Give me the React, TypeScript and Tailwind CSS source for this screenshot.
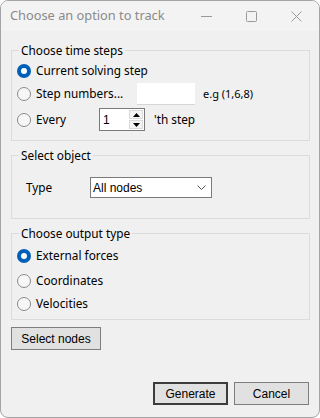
const UI_FONT = "font-['Noto_Sans',sans-serif]";
const MS_FONT = "font-['Liberation_Sans',Arial,sans-serif]";

function Radio({ checked }: { checked?: boolean }) {
  if (checked) {
    return (
      <span className="flex h-[14px] w-[14px] shrink-0 items-center justify-center rounded-full bg-[#005fb8]">
        <span className="h-[6px] w-[6px] rounded-full bg-white" />
      </span>
    );
  }
  return (
    <span className="h-[14px] w-[14px] shrink-0 rounded-full border border-[#8a8a8a] bg-[#f7f7f7]" />
  );
}

function RadioRow({
  label,
  checked,
  className = "",
}: {
  label: string;
  checked?: boolean;
  className?: string;
}) {
  return (
    <div className={`flex h-[22px] items-center gap-[5px] ${className}`}>
      <Radio checked={checked} />
      <span>{label}</span>
    </div>
  );
}

function Group({
  title,
  children,
  className = "",
}: {
  title: string;
  children: React.ReactNode;
  className?: string;
}) {
  return (
    <fieldset
      className={`border border-[#dcdcdc] px-[5px] ${className}`}
    >
      <legend className="ml-[2px] px-[2px] leading-[16px]">{title}</legend>
      {children}
    </fieldset>
  );
}

function Spinner() {
  return (
    <div className="ml-[45px] flex h-[23px] w-[46px] items-center border border-[#7a7a7a] bg-white">
      <span className={`flex-1 pl-[3px] ${MS_FONT} text-[12px]`}>1</span>
      <div className="mr-[1px] flex flex-col gap-[1px]">
        <span className="flex h-[9px] w-[14px] items-center justify-center border border-[#dadada] bg-[#f4f4f4]">
          <svg width="7" height="4" viewBox="0 0 7 4">
            <path d="M0 4 L3.5 0 L7 4 Z" fill="#000" />
          </svg>
        </span>
        <span className="flex h-[9px] w-[14px] items-center justify-center border border-[#dadada] bg-[#f4f4f4]">
          <svg width="7" height="4" viewBox="0 0 7 4">
            <path d="M0 0 L3.5 4 L7 0 Z" fill="#000" />
          </svg>
        </span>
      </div>
    </div>
  );
}

function Button({
  label,
  primary,
  className = "",
}: {
  label: string;
  primary?: boolean;
  className?: string;
}) {
  return (
    <div
      className={`flex h-[23px] items-center justify-center bg-[#e1e1e1] ${MS_FONT} text-[12px] ${
        primary
          ? "border-2 border-[#3c3c3c]"
          : "border border-[#7e7e7e]"
      } ${className}`}
    >
      {label}
    </div>
  );
}

export default function App() {
  return (
    <div
      className={`flex h-[418px] w-[320px] flex-col overflow-hidden rounded-[8px] border border-[#a5a5a5] bg-[#f0f0f0] text-[11.8px] text-black ${UI_FONT}`}
    >
      {/* title bar */}
      <div className="flex h-[30px] shrink-0 items-center bg-[#f3f3f3]">
        <span className="flex-1 pl-[9px] text-[12.8px] text-[#8a8a8a]">
          Choose an option to track
        </span>
        <div className="flex h-full">
          <span className="flex w-[45px] items-center justify-center">
            <svg width="11" height="11" viewBox="0 0 11 11">
              <path d="M0 5.5 H11" stroke="#9a9a9a" strokeWidth="1" />
            </svg>
          </span>
          <span className="flex w-[45px] items-center justify-center">
            <svg width="11" height="11" viewBox="0 0 11 11">
              <rect x="0.5" y="0.5" width="10" height="10" rx="1" fill="none" stroke="#9a9a9a" />
            </svg>
          </span>
          <span className="flex w-[45px] items-center justify-center">
            <svg width="11" height="11" viewBox="0 0 11 11">
              <path d="M0.5 0.5 L10.5 10.5 M10.5 0.5 L0.5 10.5" stroke="#9a9a9a" strokeWidth="1" />
            </svg>
          </span>
        </div>
      </div>

      <div className="flex flex-1 flex-col pl-[10px] pr-[9px] pt-[11px]">
        <Group title="Choose time steps" className="pb-[9px]">
          <RadioRow label="Current solving step" checked className="mt-[2px]" />
          <div className="mt-[1px] flex h-[22px] items-center">
            <RadioRow label="Step numbers..." className="w-[120px]" />
            <span className="h-[22px] w-[58px] border-b border-[#d6d6d6] bg-white" />
            <span className="ml-[8px] text-[11px]">e.g (1,6,8)</span>
          </div>
          <div className="mt-[3px] flex h-[23px] items-center">
            <RadioRow label="Every" className="w-[37px]" />
            <Spinner />
            <span className="ml-[9px]">'th step</span>
          </div>
        </Group>

        <Group title="Select object" className="mt-[6px] pb-[20px]">
          <div className="mt-[14px] flex h-[21px] items-center">
            <span className="ml-[9px] w-[64px]">Type</span>
            <div className="flex h-[21px] w-[122px] items-center justify-between border border-[#7a7a7a] bg-white pl-[2px] pr-[5px]">
              <span className={`${MS_FONT} text-[12px]`}>All nodes</span>
              <svg width="9" height="5" viewBox="0 0 9 5">
                <path d="M0.5 0.5 L4.5 4.5 L8.5 0.5" fill="none" stroke="#555" strokeWidth="1" />
              </svg>
            </div>
          </div>
        </Group>

        <Group title="Choose output type" className="mt-[6px] pb-[4px]">
          <RadioRow label="External forces" checked className="mt-[4px]" />
          <RadioRow label="Coordinates" className="mt-[3px]" />
          <RadioRow label="Velocities" className="mt-[1px]" />
        </Group>

        <Button label="Select nodes" className="mt-[7px] w-[90px]" />

        <div className="mt-auto flex justify-end gap-[6px] pb-[12px] pr-[1px]">
          <Button label="Generate" primary className="w-[75px]" />
          <Button label="Cancel" className="w-[75px]" />
        </div>
      </div>
    </div>
  );
}
